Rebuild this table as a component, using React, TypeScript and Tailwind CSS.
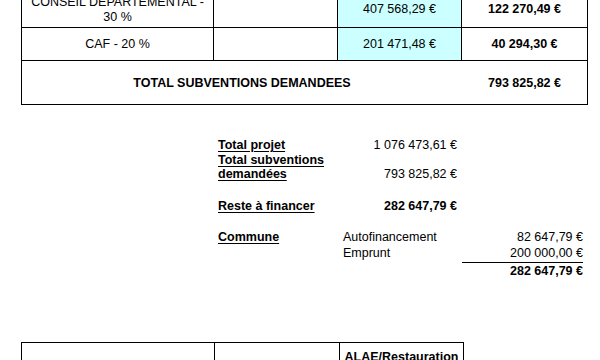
import React from "react";

const font = { fontFamily: '"Liberation Sans", Arial, sans-serif' };

const Label = ({ children }: { children: React.ReactNode }) => (
  <span className="font-bold underline underline-offset-2">{children}</span>
);

const App = () => {
  return (
    <div
      className="w-[600px] h-[360px] overflow-hidden bg-white text-[12.5px] leading-[14px] text-black"
      style={font}
    >
      {/* Subventions table */}
      <div className="-mt-[11px] ml-[21px] w-[567px] border-l border-t border-black">
        <div className="flex h-[38px]">
          <div className="w-[192px] border-r border-b border-black flex items-center justify-center text-center leading-[15px] px-1 pt-[2px]">
            CONSEIL DEPARTEMENTAL - 30 %
          </div>
          <div className="w-[124px] border-r border-b border-black" />
          <div className="w-[124px] border-r border-b border-black bg-[#ccffff] flex items-center justify-center">
            407 568,29 €
          </div>
          <div className="w-[126px] border-r border-b border-black flex items-center justify-center font-bold">
            122 270,49 €
          </div>
        </div>
        <div className="flex h-[33px]">
          <div className="w-[192px] border-r border-b border-black flex items-center justify-center">
            CAF - 20 %
          </div>
          <div className="w-[124px] border-r border-b border-black" />
          <div className="w-[124px] border-r border-b border-black bg-[#ccffff] flex items-center justify-center">
            201 471,48 €
          </div>
          <div className="w-[126px] border-r border-b border-black flex items-center justify-center font-bold">
            40 294,30 €
          </div>
        </div>
        <div className="flex h-[44px] font-bold">
          <div className="w-[440px] border-b border-black flex items-center justify-center">
            TOTAL SUBVENTIONS DEMANDEES
          </div>
          <div className="w-[126px] border-r border-b border-black flex items-center justify-center">
            793 825,82 €
          </div>
        </div>
      </div>

      {/* Récapitulatif */}
      <div className="mt-[33px] ml-[218px] w-[365px]">
        <div className="flex h-[14px]">
          <div className="w-[125px]">
            <Label>Total projet</Label>
          </div>
          <div className="w-[114px] text-right">1 076 473,61 €</div>
        </div>
        <div className="flex h-[28px] mt-px">
          <div className="w-[125px]">
            <Label>Total subventions demandées</Label>
          </div>
          <div className="w-[114px] text-right self-end">793 825,82 €</div>
        </div>
        <div className="flex h-[14px] mt-[18px] font-bold">
          <div className="w-[125px]">
            <Label>Reste à financer</Label>
          </div>
          <div className="w-[114px] text-right">282 647,79 €</div>
        </div>

        <div className="flex h-[16px] mt-[17px]">
          <div className="w-[125px]">
            <Label>Commune</Label>
          </div>
          <div className="w-[119px]">Autofinancement</div>
          <div className="w-[121px] text-right">82 647,79 €</div>
        </div>
        <div className="flex h-[17px]">
          <div className="w-[125px]" />
          <div className="w-[119px]">Emprunt</div>
          <div className="w-[121px] text-right border-b border-black">200 000,00 €</div>
        </div>
        <div className="flex h-[16px] items-center">
          <div className="w-[244px]" />
          <div className="w-[121px] text-right font-bold">282 647,79 €</div>
        </div>
      </div>

      {/* Next table */}
      <div className="mt-[63px] ml-[21px] w-[443px] border-l border-t border-black flex h-[40px]">
        <div className="w-[193px] border-r border-black" />
        <div className="w-[125px] border-r border-black" />
        <div className="w-[124px] border-r border-black pt-[7px] text-center font-bold leading-[15px]">
          ALAE/Restauration
        </div>
      </div>
    </div>
  );
};

export default App;
